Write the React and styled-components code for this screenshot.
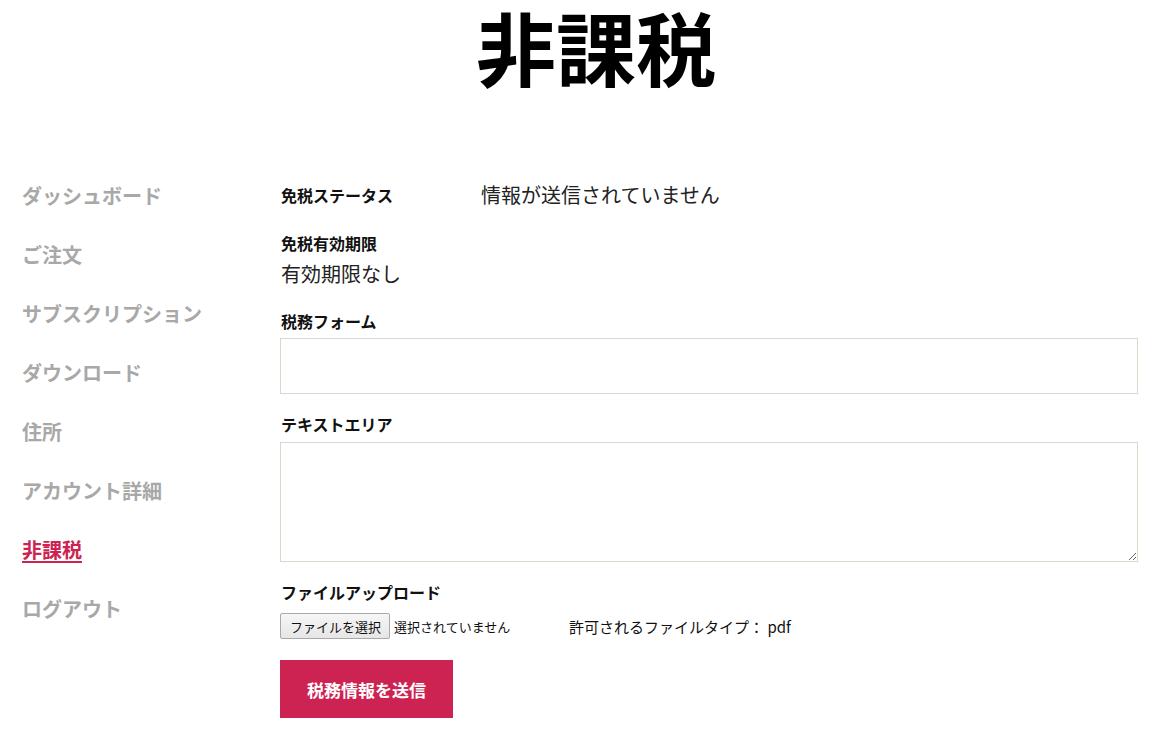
import React from 'react';
import styled, { createGlobalStyle } from 'styled-components';

const GlobalStyle = createGlobalStyle`
  body {
    margin: 0;
    background: #fff;
    font-family: "Noto Sans CJK JP", "Noto Sans", sans-serif;
    color: #111;
  }
`;

const Page = styled.div`
  width: 1168px;
  min-height: 742px;
`;

const Title = styled.h1`
  margin: 0;
  padding: 0 0 10px 24px;
  font-size: 80px;
  line-height: 90px;
  font-weight: 700;
  text-align: center;
  color: #000;
`;

const Layout = styled.div`
  display: grid;
  grid-template-columns: 280px 858px;
  margin-top: 66px;
`;

const SideNav = styled.nav`
  display: flex;
  flex-direction: column;
  padding-left: 22px;
`;

const NavItem = styled.a`
  height: 59px;
  line-height: 59px;
  font-size: 20px;
  font-weight: 700;
  color: ${(p) => (p.$active ? '#cd2352' : '#a8a8a8')};
  text-decoration: ${(p) => (p.$active ? 'underline' : 'none')};
  text-underline-offset: 3px;
  text-decoration-thickness: 2px;
  cursor: pointer;
`;

const Content = styled.section`
  display: flex;
  flex-direction: column;
  padding-top: 14px;
`;

const StatusRow = styled.div`
  display: grid;
  grid-template-columns: 200px 1fr;
  align-items: center;
  height: 30px;
`;

const Label = styled.div`
  font-size: 16px;
  font-weight: 700;
  line-height: 24px;
  color: #111;
  margin-top: ${(p) => p.$top || 0}px;
  padding-left: 1px;
`;

const Value = styled.div`
  font-size: 20px;
  line-height: 28px;
  color: #222;
  margin-top: ${(p) => p.$top || 0}px;
  padding-left: 1px;
`;

const TextInput = styled.input`
  box-sizing: border-box;
  width: 100%;
  height: 56px;
  margin-top: 5px;
  border: 1px solid #dcd7ca;
  outline: none;
  background: #fff;
`;

const TextArea = styled.textarea`
  box-sizing: border-box;
  display: block;
  width: 100%;
  height: 120px;
  margin-top: 6px;
  border: 1px solid #dcd7ca;
  outline: none;
  background: #fff;
`;

const FileRow = styled.div`
  display: flex;
  align-items: center;
  height: 26px;
  margin-top: 9px;
  font-size: 13px;
`;

const FileButton = styled.span`
  box-sizing: border-box;
  display: inline-flex;
  align-items: center;
  height: 26px;
  padding: 0 8px 0 9px;
  border: 1px solid #a9a9a9;
  border-radius: 2px;
  background: linear-gradient(#f6f6f6, #e6e6e6);
  font-size: 13px;
  color: #111;
`;

const FileName = styled.span`
  margin-left: 4px;
  width: 175px;
  color: #111;
`;

const FileTypes = styled.span`
  font-size: 15px;
  color: #111;
`;

const SubmitButton = styled.button`
  align-self: flex-start;
  margin-top: 21px;
  height: 58px;
  padding: 0 27px;
  border: none;
  background: #cd2352;
  color: #fff;
  font-family: inherit;
  font-size: 17px;
  font-weight: 700;
  cursor: pointer;
`;

const navItems = [
  'ダッシュボード',
  'ご注文',
  'サブスクリプション',
  'ダウンロード',
  '住所',
  'アカウント詳細',
  '非課税',
  'ログアウト',
];

const App = () => {
  return (
    <Page>
      <GlobalStyle />
      <Title>非課税</Title>
      <Layout>
        <SideNav>
          {navItems.map((item) => (
            <NavItem key={item} $active={item === '非課税'}>
              {item}
            </NavItem>
          ))}
        </SideNav>
        <Content>
          <StatusRow>
            <Label>免税ステータス</Label>
            <Value>情報が送信されていません</Value>
          </StatusRow>
          <Label $top={21}>免税有効期限</Label>
          <Value $top={5}>有効期限なし</Value>
          <Label $top={21}>税務フォーム</Label>
          <TextInput type="text" />
          <Label $top={18}>テキストエリア</Label>
          <TextArea />
          <Label $top={18}>ファイルアップロード</Label>
          <FileRow>
            <FileButton>ファイルを選択</FileButton>
            <FileName>選択されていません</FileName>
            <FileTypes>許可されるファイルタイプ： pdf</FileTypes>
          </FileRow>
          <SubmitButton type="button">税務情報を送信</SubmitButton>
        </Content>
      </Layout>
    </Page>
  );
};

export default App;
